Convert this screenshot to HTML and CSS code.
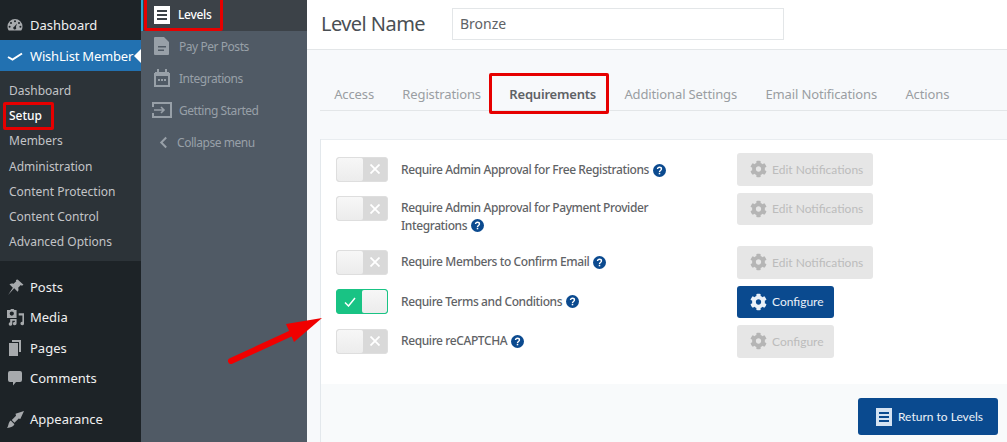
FILE: index.html
```html
<!DOCTYPE html>
<html lang="en">
<head>
<meta charset="utf-8">
<title>Level Requirements</title>
<link rel="stylesheet" href="styles.css">
</head>
<body>
<svg class="defs" width="0" height="0" aria-hidden="true">
  <symbol id="gear" viewBox="0 0 512 512"><path fill="currentColor" d="M487.4 315.7l-42.6-24.6c4.3-23.2 4.3-47 0-70.2l42.6-24.6c4.9-2.8 7.1-8.6 5.5-14-11.1-35.6-30-67.8-54.7-94.6-3.8-4.1-10-5.1-14.8-2.3L380.8 110c-17.9-15.4-38.5-27.3-60.8-35.1V25.8c0-5.6-3.9-10.5-9.4-11.7-36.7-8.2-74.3-7.8-109.2 0-5.5 1.2-9.4 6.1-9.4 11.7V75c-22.2 7.9-42.8 19.8-60.8 35.1L88.7 85.5c-4.9-2.8-11-1.9-14.8 2.3-24.7 26.7-43.6 58.9-54.7 94.6-1.7 5.4.6 11.2 5.5 14L67.3 221c-4.3 23.2-4.3 47 0 70.2l-42.6 24.6c-4.9 2.8-7.1 8.6-5.5 14 11.1 35.6 30 67.8 54.7 94.6 3.8 4.1 10 5.1 14.8 2.3l42.6-24.6c17.9 15.4 38.5 27.3 60.8 35.1v49.2c0 5.6 3.9 10.5 9.4 11.7 36.7 8.2 74.3 7.8 109.2 0 5.5-1.2 9.4-6.1 9.4-11.7v-49.2c22.2-7.9 42.8-19.8 60.8-35.1l42.6 24.6c4.9 2.8 11 1.9 14.8-2.3 24.7-26.7 43.6-58.9 54.7-94.6 1.5-5.5-.7-11.3-5.6-14.1zM256 336c-44.1 0-80-35.9-80-80s35.9-80 80-80 80 35.9 80 80-35.9 80-80 80z"/></symbol>
  <symbol id="list" viewBox="0 0 16 18"><path fill="currentColor" fill-rule="evenodd" d="M0 0h16v18H0zM3 4v2h10V4zM3 8v2h10V8zM3 12v2h10v-2z"/></symbol>
  <symbol id="help" viewBox="0 0 12 12"><circle cx="6" cy="6" r="6" fill="#0b4a8f"/><path d="M4.2 4.7C4.2 3.7 5 3 6 3s1.8.7 1.8 1.600c0 1.400-1.800 1.400-1.800 2.700" fill="none" stroke="#fff" stroke-width="1.300"/><rect x="5.300" y="8.100" width="1.400" height="1.400" fill="#fff"/></symbol>
  <symbol id="cross" viewBox="0 0 10 10"><path d="M.5.5l9 9M9.500.5l-9 9" fill="none" stroke="currentColor" stroke-width="1.800"/></symbol>
</svg>

<div class="app">
  <nav class="wp-menu">
    <a class="wp-item wp-first"><svg class="wp-icon" viewBox="0 0 16 16"><path fill="#a7aaad" fill-rule="evenodd" d="M8 2a7.500 7.500 0 0 0-7.500 7.500c0 1.700.5 3 1.300 4h12.400c.8-1 1.300-2.300 1.300-4A7.500 7.500 0 0 0 8 2zM8 3.300a1 1 0 1 1 0 2 1 1 0 0 1 0-2zM4 5a1 1 0 1 1 0 2 1 1 0 0 1 0-2zM12 5a1 1 0 1 1 0 2 1 1 0 0 1 0-2zM2.600 8.800a1 1 0 1 1 0 2 1 1 0 0 1 0-2zM13.400 8.800a1 1 0 1 1 0 2 1 1 0 0 1 0-2zM10 6.500L8.900 10a1.500 1.500 0 1 1-1.500-.500z"/></svg>Dashboard</a>
    <a class="wp-item wp-active"><svg class="wp-icon" viewBox="0 0 16 16"><path fill="none" stroke="#fff" stroke-width="2" d="M1 9l4.500 2.500L15 5.500"/></svg>WishList Member</a>
    <ul class="wp-sub">
      <li>Dashboard</li>
      <li class="wp-current">Setup</li>
      <li>Members</li>
      <li>Administration</li>
      <li>Content Protection</li>
      <li>Content Control</li>
      <li>Advanced Options</li>
    </ul>
    <a class="wp-item wp-posts"><svg class="wp-icon wp-icon-lg" viewBox="0 0 16 16"><path fill="#a7aaad" d="M10 .5l5.500 5-1.500.8-1-.6-2.500 2.500c.6 1.500.3 2.800-.5 3.800L6.800 8.800 1 15l4.500-6.800L2.300 5c1-.8 2.500-1.100 3.900-.5L8.700 2 8.300 1z"/></svg>Posts</a>
    <a class="wp-item"><svg class="wp-icon wp-icon-lg" viewBox="0 0 16 16"><path fill="#a7aaad" fill-rule="evenodd" d="M0 1h3l.8-1h2.400l.8 1h2v7.500H0zM4.500 2.300a2 2 0 1 0 0 4 2 2 0 0 0 0-4zM11 4h5v9.500a1.700 1.700 0 1 1-1.500-1.500V6H11zM3 9.500h6v4.200A1.700 1.700 0 1 1 7.500 12v-1H5v3.200A1.700 1.700 0 1 1 3 12.500z"/></svg>Media</a>
    <a class="wp-item"><svg class="wp-icon" viewBox="0 0 16 16"><path fill="#a7aaad" d="M5 0h9v12h-2V2H5zM2 3h9v13H2z"/></svg>Pages</a>
    <a class="wp-item"><svg class="wp-icon" viewBox="0 0 16 16"><path fill="#a7aaad" d="M3 1h10a2 2 0 0 1 2 2v7a2 2 0 0 1-2 2H9l-3 3.500V12H3a2 2 0 0 1-2-2V3a2 2 0 0 1 2-2z"/></svg>Comments</a>
    <a class="wp-item wp-appearance"><svg class="wp-icon wp-icon-lg" viewBox="0 0 16 16"><path fill="#a7aaad" d="M8 2.500l8-2.500-3.500 7.500-1.500-.5-4 4-2.500-2.500 4-4zM3.500 9l3.500 3.500c-1 2-3 3-7 3.500 1.500-1.500 1-5 3.500-7z"/></svg>Appearance</a>
  </nav>

  <aside class="wl-menu">
    <a class="wl-item wl-current"><svg class="wl-icon wl-white"><use href="#list"/></svg>Levels</a>
    <a class="wl-item"><svg class="wl-icon" viewBox="0 0 16 18"><path fill="currentColor" fill-rule="evenodd" d="M1 0h9l5 5v12a1 1 0 0 1-1 1H1a1 1 0 0 1-1-1V1a1 1 0 0 1 1-1zM4 9v1.500h8V9zM4 12.500V14h6v-1.500z"/></svg>Pay Per Posts</a>
    <a class="wl-item"><svg class="wl-icon" viewBox="0 0 16 18"><path fill="none" stroke="currentColor" stroke-width="2" d="M1 5h14v12H1z"/><path fill="currentColor" d="M1 3h14v4H1zM3 0h2v3H3zM11 0h2v3h-2zM4 10h2v2H4zM7 10h2v2H7zM10 10h2v2h-2z"/></svg>Integrations</a>
    <a class="wl-item wl-wide"><svg class="wl-icon" viewBox="0 0 20 16"><path fill="none" stroke="currentColor" stroke-width="2" d="M4 1h15v14H4M1 5V1h3M1 11v4h3"/><path fill="none" stroke="currentColor" stroke-width="1.600" d="M2 8h10M9 5l3 3-3 3"/></svg>Getting Started</a>
    <a class="wl-item wl-collapse"><svg class="wl-icon" viewBox="0 0 10 14"><path fill="none" stroke="currentColor" stroke-width="2.200" d="M8 1.500L2.500 7 8 12.500"/></svg>Collapse menu</a>
  </aside>

  <main class="content">
    <header class="level-head">
      <h1 class="level-title">Level Name</h1>
      <div class="level-input">Bronze</div>
    </header>
    <div class="tab-area">
      <ul class="tabs">
        <li>Access</li>
        <li>Registrations</li>
        <li class="tab-active">Requirements</li>
        <li>Additional Settings</li>
        <li>Email Notifications</li>
        <li>Actions</li>
      </ul>
    </div>
    <section class="panel">
      <div class="card">
        <div class="row">
          <span class="toggle"><span class="knob"></span><svg class="x"><use href="#cross"/></svg></span>
          <span class="label">Require Admin Approval for Free Registrations <svg class="help"><use href="#help"/></svg></span>
          <span class="btn btn-off"><svg class="gear"><use href="#gear"/></svg>Edit Notifications</span>
        </div>
        <div class="row row-tall">
          <span class="toggle"><span class="knob"></span><svg class="x"><use href="#cross"/></svg></span>
          <span class="label">Require Admin Approval for Payment Provider Integrations <svg class="help"><use href="#help"/></svg></span>
          <span class="btn btn-off"><svg class="gear"><use href="#gear"/></svg>Edit Notifications</span>
        </div>
        <div class="row">
          <span class="toggle"><span class="knob"></span><svg class="x"><use href="#cross"/></svg></span>
          <span class="label">Require Members to Confirm Email <svg class="help"><use href="#help"/></svg></span>
          <span class="btn btn-off"><svg class="gear"><use href="#gear"/></svg>Edit Notifications</span>
        </div>
        <div class="row">
          <span class="toggle toggle-on"><svg class="check" viewBox="0 0 12 10"><path d="M1 5.500L4.500 9 11 1" fill="none" stroke="#fff" stroke-width="1.500"/></svg><span class="knob"></span></span>
          <span class="label">Require Terms and Conditions <svg class="help"><use href="#help"/></svg></span>
          <span class="btn btn-on"><svg class="gear"><use href="#gear"/></svg>Configure</span>
        </div>
        <div class="row">
          <span class="toggle"><span class="knob"></span><svg class="x"><use href="#cross"/></svg></span>
          <span class="label">Require reCAPTCHA <svg class="help"><use href="#help"/></svg></span>
          <span class="btn btn-off"><svg class="gear"><use href="#gear"/></svg>Configure</span>
        </div>
      </div>
      <div class="panel-foot">
        <span class="btn btn-on btn-return"><svg class="list-icon"><use href="#list"/></svg>Return to Levels</span>
      </div>
    </section>
  </main>
</div>

<div class="mark mark-levels"></div>
<div class="mark mark-setup"></div>
<div class="mark mark-tab"></div>
<svg class="arrow" viewBox="0 0 100 50" aria-hidden="true">
  <path fill="#f00000" d="M96 0L60 6l8 18z"/>
  <path fill="none" stroke="#f00000" stroke-width="6" stroke-linecap="round" d="M5 43L68 14"/>
</svg>
</body>
</html>
```

FILE: styles.css
```css
* { box-sizing: border-box; }
html, body { margin: 0; padding: 0; height: 442px; overflow: hidden; background: #fff; }
body { position: relative; font-family: "Noto Sans", sans-serif; }
ul { list-style: none; margin: 0; padding: 0; }
.defs { position: absolute; }

.app { display: grid; grid-template-columns: 141px 166px 1fr; height: 442px; }

.wp-menu { background: #1d2327; color: #f0f0f1; font-size: 13px; padding-top: 10px; overflow: hidden; }
.wp-item { display: flex; align-items: center; height: 30.300px; padding-left: 7px; gap: 7px; }
.wp-first { height: 30px; }
.wp-icon { width: 16px; height: 16px; flex: none; }
.wp-icon-lg { width: 17px; height: 17px; margin-right: -1px; }
.wp-active { background: #2271b1; color: #fff; height: 31px; position: relative; letter-spacing: -.2px; }
.wp-active::after { content: ""; position: absolute; right: 0; top: 9px; border: 7px solid transparent; border-right-color: #fff; border-left-width: 0; }
.wp-sub { background: #2c3338; color: #c3c4c7; font-size: 12px; height: 190px; padding: 7px 0 0 9px; }
.wp-sub li { height: 25.200px; line-height: 25px; }
.wp-current { color: #fff; font-weight: 500; }
.wp-posts { margin-top: 11px; }
.wp-appearance { margin-top: 11px; }

.wl-menu { background: #505a65; color: #98a0a8; font-size: 12px; letter-spacing: -.45px; }
.wl-item { display: flex; align-items: center; height: 32px; padding: 0 0 2px 13px; gap: 9px; }
.wl-current { height: 31px; background: #3c4248; color: #fff; border-left: 2px solid #2ea2cc; font-weight: 500; padding-left: 11px; gap: 8px; letter-spacing: -.3px; }
.wl-icon { width: 16px; height: 18px; flex: none; }
.wl-white { color: #fff; }
.wl-wide { padding-left: 11px; gap: 7px; }
.wl-wide .wl-icon { width: 20px; height: 16px; }
.wl-collapse { padding-left: 18px; gap: 9px; }
.wl-collapse .wl-icon { width: 9px; height: 13px; }

.content { display: flex; flex-direction: column; background: #f7f9fb; min-width: 0; }
.level-head { display: flex; align-items: center; height: 50px; background: #fff; border-bottom: 1px solid #e3e6e8; padding: 0 0 2px 14px; }
.level-title { margin: 0; width: 131px; font: 400 20px "Noto Sans", sans-serif; letter-spacing: -.55px; color: #4a4f54; }
.level-input { width: 332px; height: 32px; border: 1px solid #e3e6e8; padding-left: 7px; font: 400 14px/30px "Noto Sans", sans-serif; color: #5e6266; }

.tab-area { padding: 23px 0 0 13px; height: 89px; }
.tabs { display: flex; height: 38px; border-bottom: 1px solid #e3e6e8; font: 400 13px/43px "Noto Sans", sans-serif; letter-spacing: -.13px; color: #9a9ea2; }
.tabs li { padding: 0 14.200px; }
.tab-active { color: #5e6266; font-weight: 600; letter-spacing: -.2px; }

.panel { flex: 1; margin-left: 13px; border-left: 1px solid #e3e8ec; display: flex; flex-direction: column; }
.card { background: #fff; height: 245px; padding: 13px 0 0 15px; display: flex; flex-direction: column; gap: 7px; border-top: 1px solid #e9edf0; }
.row { display: flex; align-items: flex-start; min-height: 32.500px; }
.row-tall { min-height: 46.500px; }
.row:first-child .label { margin-top: 8px; }
.row-tall .label { margin-top: 6px; }
.toggle { display: flex; width: 52px; height: 25px; margin-top: 3.500px; border-radius: 3px; background: #d9d9d9; border: 1px solid #dedede; flex: none; align-items: center; overflow: hidden; }
.knob { width: 26px; height: 23px; background: linear-gradient(#f7f7f7, #ececec); flex: none; border-radius: 2px; }
.x { width: 10px; height: 10px; margin-left: 7px; color: #fff; }
.toggle-on { background: #19c384; border-color: #19c384; justify-content: flex-end; }
.check { width: 12px; height: 10px; margin-right: 6px; }
.toggle-on .knob { width: 25px; }
.label { width: 336px; margin: 7px 0 0 13px; padding-right: 50px; font: 500 12px/18px "Noto Sans", sans-serif; letter-spacing: -.4px; color: #5f6366; flex: none; }
.help { width: 13px; height: 13px; vertical-align: -2.500px; margin-left: 1px; }
.btn { display: inline-flex; align-items: center; height: 32.500px; padding: 0 10px 0 13px; border-radius: 3px; font: 400 12px Lato, sans-serif; gap: 5px; flex: none; }
.btn-off { background: #e6e6e6; color: #bcbcbc; }
.btn-on { background: #0a4a8f; color: #eaf1f8; }
.gear { width: 17px; height: 18px; color: inherit; flex: none; }
.btn-off .gear { color: #b5b5b5; }
.panel-foot { flex: 1; background: #f8fafb; display: flex; justify-content: flex-end; align-items: flex-start; padding: 14px 9px 0 0; }
.btn-return { height: 37px; padding: 0 15px 0 18px; gap: 6px; }
.list-icon { width: 16px; height: 18px; color: #d5e3f2; flex: none; }

.mark { position: absolute; border: 3px solid #e60000; border-radius: 2px; pointer-events: none; }
.mark-levels { left: 144px; top: -3px; width: 79px; height: 34px; }
.mark-setup { left: 3px; top: 102px; width: 51px; height: 28px; }
.mark-tab { left: 489px; top: 73px; width: 120px; height: 41px; }
.arrow { position: absolute; left: 226px; top: 318px; width: 100px; height: 50px; }
```
